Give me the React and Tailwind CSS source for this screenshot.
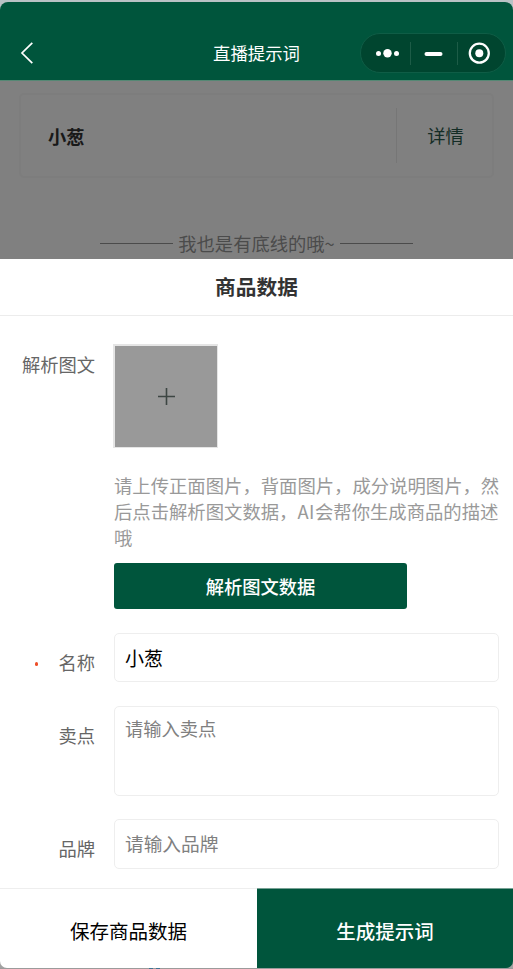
const inputBox = "box-border rounded-[5px] border border-[#eeeeee] bg-white";

function Header() {
  return (
    <header className="relative flex h-[78px] shrink-0 items-start rounded-t-[8px] bg-[#00553c] text-white">
      <svg className="ml-5 mt-[39px] h-6 w-4" viewBox="0 0 16 24" fill="none" stroke="#fff" strokeWidth="1.7">
        <path d="M12.3 1.8 2 12l10.3 10.2" />
      </svg>
      <h1 className="absolute left-0 top-[38px] w-full text-center text-[17.4px] font-normal leading-[26px]">直播提示词</h1>
      <div className="ml-auto mr-[7px] mt-[31px] flex h-10 w-[146px] items-center rounded-full border border-[#0f5d46] bg-[#00452f]">
        <svg className="h-[38px] w-[144px]" viewBox="0 0 144 38" fill="#fff">
          <circle cx="17.5" cy="19.5" r="2.5" />
          <circle cx="26.5" cy="19.2" r="4.2" />
          <circle cx="35.5" cy="19.5" r="2.5" />
          <rect x="49" y="8" width="1" height="23" fill="#1d5c47" />
          <rect x="63.5" y="18" width="18" height="4" rx="2" />
          <rect x="96" y="8" width="1" height="23" fill="#1d5c47" />
          <circle cx="118.3" cy="19.2" r="9.5" fill="none" stroke="#fff" strokeWidth="2.3" />
          <circle cx="118.3" cy="19.2" r="4" />
        </svg>
      </div>
    </header>
  );
}

function Backdrop() {
  return (
    <section className="h-[179px] shrink-0 border-t border-[#558874] bg-[#808080] pt-[12px]">
      <div className="mx-auto flex h-[85px] w-[475px] items-center rounded-[5px] border-2 border-[#7d7d7d] pl-[27px]">
        <span className="text-[18.3px] font-bold leading-7 text-[#191919]">小葱</span>
        <div className="ml-auto flex h-[55px] w-[96px] items-center justify-center border-l border-[#767676] pl-[2px] text-[18.3px] text-[#142d26]">
          <span className="pt-px">详情</span>
        </div>
      </div>
      <div className="mt-[51px] flex items-center justify-center text-[18.3px] leading-7 text-[#4b4b4b]">
        <span className="mr-[5px] h-px w-[73px] bg-[#4b4b4b]" />
        <span className="whitespace-nowrap">我也是有底线的哦~</span>
        <span className="ml-[5px] h-px w-[73px] bg-[#4b4b4b]" />
      </div>
    </section>
  );
}

function Label({ children, className }) {
  return <div className={`w-[95px] shrink-0 text-right text-[18.3px] leading-[26px] text-[#666666] ${className}`}>{children}</div>;
}

function Form() {
  return (
    <main className="h-[572px] shrink-0 bg-white pr-[14px]">
      <div className="flex pt-[28px]">
        <Label className="pt-[7px]">解析图文</Label>
        <div className="ml-[18px] flex-1">
          <div className="flex h-[104px] w-[105px] items-center justify-center border-b border-l-2 border-r border-t-2 border-[#e5e5e5] bg-[#999999]">
            <svg className="h-[17px] w-[17px]" viewBox="0 0 17 17" stroke="#3d4643" strokeWidth="1.6">
              <path d="M0 8.5h17M8.5 0v17" />
            </svg>
          </div>
          <p className="ml-px mt-[24px] h-[78px] whitespace-nowrap text-[18.35px] leading-[26px] text-[#999999]">
            请上传正面图片，背面图片，成分说明图片，然<br />后点击解析图文数据，<span className="tracking-[0.5px]">AI</span>会帮你生成商品的描述<br />哦
          </p>
          <button className="ml-px mt-[13px] block h-[46px] w-[293px] rounded-[3px] bg-[#00553c] text-[18.3px] font-medium leading-[46px] text-white">解析图文数据</button>
        </div>
      </div>
      <div className="mt-[24px] flex">
        <Label className="relative pt-[16px]">
          <span className="absolute left-[35px] top-[29px] h-1 w-[3px] rounded-full bg-[#ee4e28]" />
          名称
        </Label>
        <div className={`${inputBox} ml-[19px] h-[49px] flex-1 pl-[10px] text-[19px] leading-[47px] text-black`}>小葱</div>
      </div>
      <div className="mt-[24px] flex">
        <Label className="pt-[16px]">卖点</Label>
        <div className={`${inputBox} ml-[19px] h-[90px] flex-1 pl-[10px] pt-[8px] text-[18.3px] leading-[26px] text-[#808080]`}>请输入卖点</div>
      </div>
      <div className="mt-[23px] flex">
        <Label className="pt-[16px]">品牌</Label>
        <div className={`${inputBox} ml-[19px] h-[50px] flex-1 pl-[10px] text-[18.7px] leading-[46px] text-[#808080]`}>请输入品牌</div>
      </div>
    </main>
  );
}

export default function App() {
  return (
    <div className="flex h-[969px] w-[513px] flex-col overflow-hidden bg-[#b9c2c5] pt-[2px] font-['Noto_Sans_CJK_SC',sans-serif]">
      <Header />
      <Backdrop />
      <h2 className="h-[57px] shrink-0 border-b border-[#ececec] bg-white text-center text-[20.7px] font-bold leading-[54px] text-[#333333]">商品数据</h2>
      <Form />
      <footer className="flex h-[80px] shrink-0 bg-[#a2a2a2] text-[19.5px]">
        <div className="h-full w-[257px] rounded-bl-[7px] border-t border-[#eeeeee] bg-white text-center leading-[84px] text-black">保存商品数据</div>
        <div className="h-full flex-1 rounded-br-[7px] border-t border-[#78a194] bg-[#00553c] text-center font-medium leading-[84px] text-white">生成提示词</div>
      </footer>
      <div className="flex h-px shrink-0 bg-[#9b9b9b]">
        <span className="ml-[149px] h-px w-1 bg-[#3f7393]" />
        <span className="ml-[3px] h-px w-1 bg-[#3f7393]" />
      </div>
    </div>
  );
}
